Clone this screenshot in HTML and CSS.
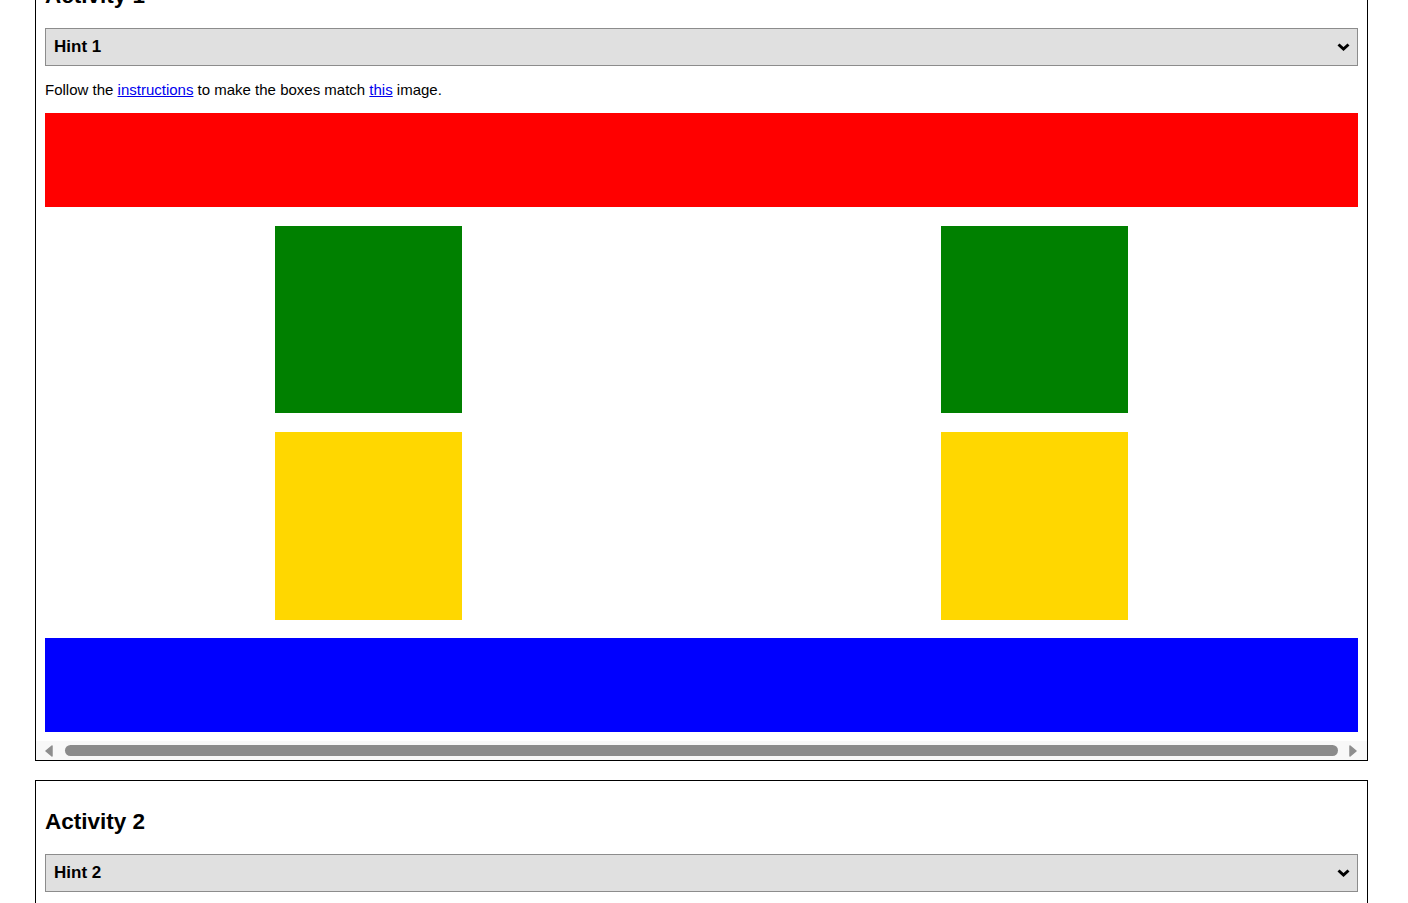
FILE: index.html
```html
<!DOCTYPE html>
<html lang="en">
<head>
<meta charset="utf-8">
<title>Activities</title>
<link rel="stylesheet" href="styles.css">
</head>
<body>
<div class="page">
  <section class="activity">
    <h2 class="activity-title">Activity 1</h2>
    <details class="hint">
      <summary class="hint-summary"><span>Hint 1</span><svg class="chevron" width="13" height="8" viewBox="0 0 13 8"><path d="M1.5 1.5 L6.5 6 L11.5 1.5" fill="none" stroke="#000" stroke-width="3"/></svg></summary>
      <p class="hint-body">Use flexbox to place the boxes.</p>
    </details>
    <p class="intro">Follow the <a href="#">instructions</a> to make the boxes match <a href="#">this</a> image.</p>
    <div class="bar red"></div>
    <div class="squares">
      <div class="sq green"></div>
      <div class="sq green"></div>
      <div class="sq yellow"></div>
      <div class="sq yellow"></div>
    </div>
    <div class="bar blue"></div>
    <div class="hscroll" aria-hidden="true">
      <svg class="hs-arrow" width="8" height="12" viewBox="0 0 8 12"><path d="M7 1 L7 11 L1 6 Z" fill="#8e8e8e" stroke="#8e8e8e" stroke-width="1.5" stroke-linejoin="round"/></svg>
      <div class="hs-thumb"></div>
      <svg class="hs-arrow" width="8" height="12" viewBox="0 0 8 12"><path d="M1 1 L1 11 L7 6 Z" fill="#8e8e8e" stroke="#8e8e8e" stroke-width="1.5" stroke-linejoin="round"/></svg>
    </div>
  </section>

  <section class="activity">
    <h2 class="activity-title">Activity 2</h2>
    <details class="hint">
      <summary class="hint-summary"><span>Hint 2</span><svg class="chevron" width="13" height="8" viewBox="0 0 13 8"><path d="M1.5 1.5 L6.5 6 L11.5 1.5" fill="none" stroke="#000" stroke-width="3"/></svg></summary>
      <p class="hint-body">Use grid to place the boxes.</p>
    </details>
    <p class="intro">Follow the <a href="#">instructions</a> to make the boxes match <a href="#">this</a> image.</p>
  </section>
</div>
</body>
</html>
```
FILE: styles.css
```css
html, body {
  margin: 0;
  padding: 0;
  background: #fff;
}
body {
  font-family: "Liberation Sans", Arial, sans-serif;
  font-size: 15px;
  color: #000;
}
.page {
  margin-top: -46px;
  padding: 0 40px 0 35px;
}
.activity {
  border: 1px solid #000;
  padding: 9px 9px 0;
  margin-bottom: 19px;
}
.activity-title {
  font-size: 22.5px;
  font-weight: bold;
  margin: 18.7px 0 19.5px;
}
.hint {
  margin: 0;
}
.hint-summary {
  list-style: none;
  display: flex;
  justify-content: space-between;
  align-items: center;
  background: #e0e0e0;
  border: 1px solid #8c8c8c;
  padding: 8px 7px 8px 8px;
  font-size: 17px;
  font-weight: bold;
  line-height: 20px;
  cursor: pointer;
}
.hint-summary::-webkit-details-marker {
  display: none;
}
.chevron {
  display: block;
}
.hint-body {
  margin: 8px 0;
}
.intro {
  margin: 15px 0;
  line-height: 17px;
}
.intro a {
  color: #0000ee;
}
.bar {
  height: 94px;
}
.red { background: #ff0000; }
.blue { background: #0000ff; }
.squares {
  display: grid;
  grid-template-columns: 666px 1fr;
  row-gap: 19px;
  margin: 19px 0 18px;
}
.sq {
  width: 187px;
  height: 187px;
  margin-left: 230px;
}
.green { background: #008000; }
.yellow { background: #ffd700; height: 188px; }

.hscroll {
  display: flex;
  align-items: center;
  height: 19px;
  margin: 9px -9px 0;
  padding: 0 10px 0 9px;
  background: #f8f8f8;
}
.hs-arrow {
  display: block;
  flex: none;
}
.hs-thumb {
  flex: 1;
  height: 11px;
  margin: 0 11px 0 12px;
  border-radius: 6px;
  background: #8b8b8b;
}
```
